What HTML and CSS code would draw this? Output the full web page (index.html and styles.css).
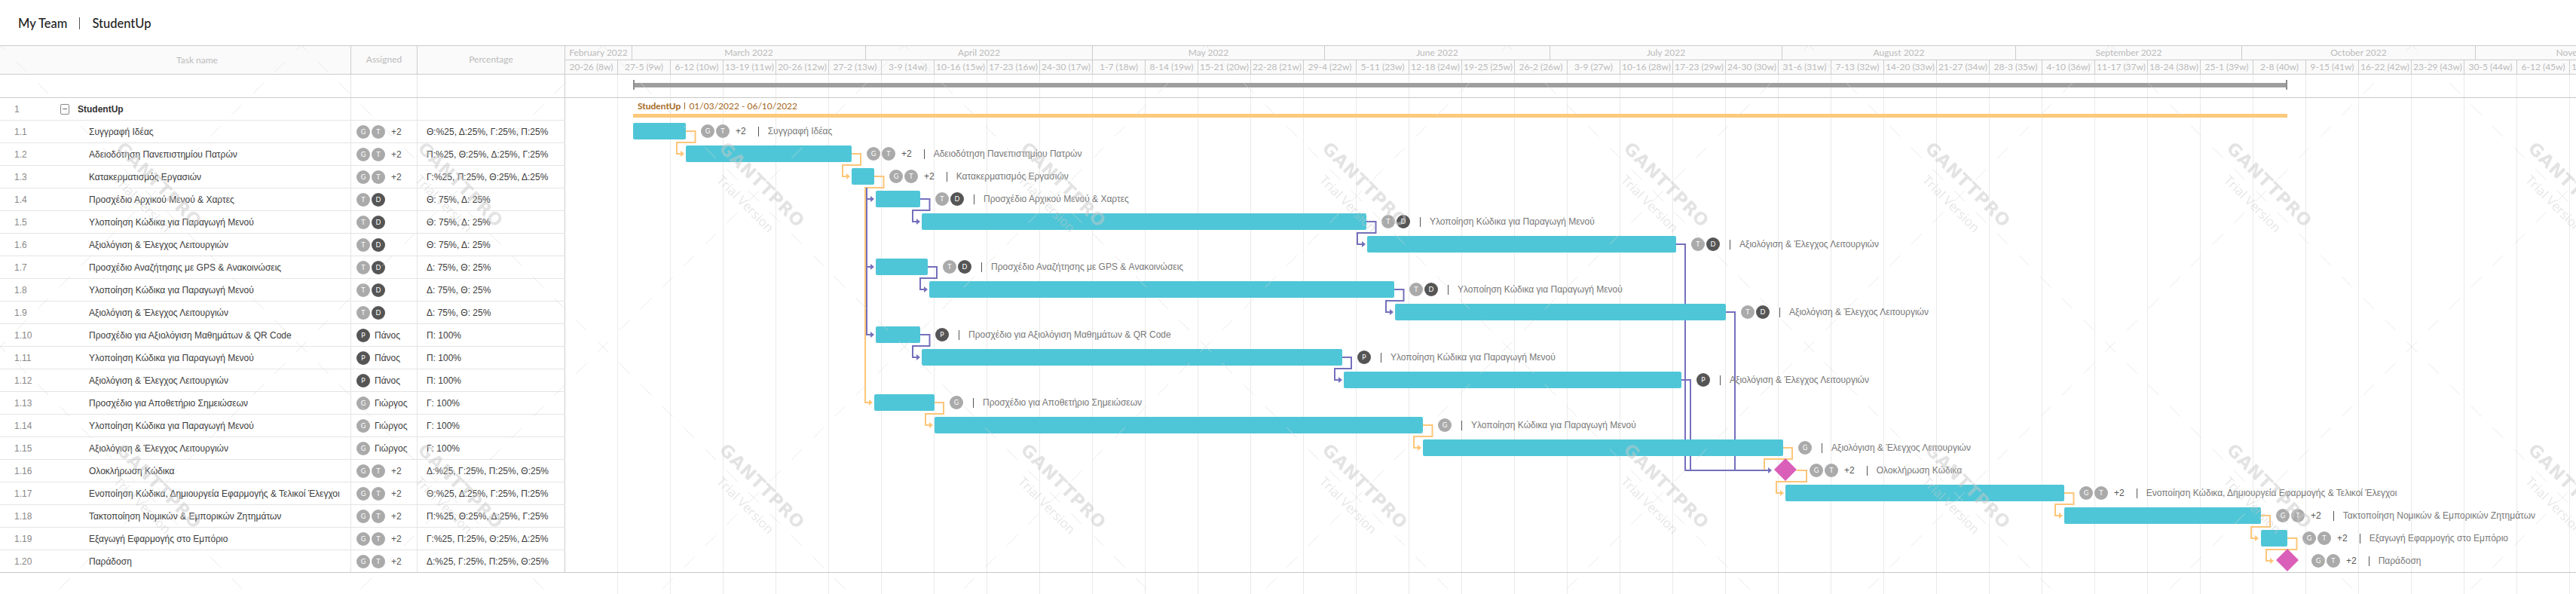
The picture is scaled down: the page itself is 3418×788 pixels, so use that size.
FILE: index.html
```html
<!DOCTYPE html>
<html lang="el">
<head>
    <meta charset="UTF-8">
    <title>StudentUp</title>
    <link rel="stylesheet" href="styles.css">
</head>
<body>
<header class="topbar">
    <span>My Team</span>
    <i class="topbar-sep"></i>
    <span>StudentUp</span>
</header>

<div class="gantt">
    <!-- Left: task table -->
    <div class="grid">
        <div class="row row-head">
            <div class="cell cell-task"><span class="head-task">Task name</span></div>
            <div class="cell cell-assigned head-center">Assigned</div>
            <div class="cell cell-percent head-center">Percentage</div>
        </div>
        <div class="row row-blank">
            <div class="cell cell-task"></div><div class="cell cell-assigned"></div><div class="cell cell-percent"></div>
        </div>
        <div class="row">
            <div class="cell cell-task"><span class="num num-project">1</span><span class="toggle"></span><strong class="project-name">StudentUp</strong></div>
            <div class="cell cell-assigned"></div><div class="cell cell-percent"></div>
        </div>
        <div class="row"><div class="cell cell-task"><span class="num">1.1</span>Συγγραφή Ιδέας</div><div class="cell cell-assigned"><span class="av">G</span><span class="av">T</span><span class="more">+2</span></div><div class="cell cell-percent">Θ:%25, Δ:25%, Γ:25%, Π:25%</div></div>
        <div class="row"><div class="cell cell-task"><span class="num">1.2</span>Αδειοδότηση Πανεπιστημίου Πατρών</div><div class="cell cell-assigned"><span class="av">G</span><span class="av">T</span><span class="more">+2</span></div><div class="cell cell-percent">Π:%25, Θ:25%, Δ:25%, Γ:25%</div></div>
        <div class="row"><div class="cell cell-task"><span class="num">1.3</span>Κατακερματισμός Εργασιών</div><div class="cell cell-assigned"><span class="av">G</span><span class="av">T</span><span class="more">+2</span></div><div class="cell cell-percent">Γ:%25, Π:25%, Θ:25%, Δ:25%</div></div>
        <div class="row"><div class="cell cell-task"><span class="num">1.4</span>Προσχέδιο Αρχικού Μενού &amp; Χαρτες</div><div class="cell cell-assigned"><span class="av">T</span><span class="av av-dark">D</span></div><div class="cell cell-percent">Θ: 75%, Δ: 25%</div></div>
        <div class="row"><div class="cell cell-task"><span class="num">1.5</span>Υλοποίηση Κώδικα για Παραγωγή Μενού</div><div class="cell cell-assigned"><span class="av">T</span><span class="av av-dark">D</span></div><div class="cell cell-percent">Θ: 75%, Δ: 25%</div></div>
        <div class="row"><div class="cell cell-task"><span class="num">1.6</span>Αξιολόγιση &amp; Έλεγχος Λειτουργιών</div><div class="cell cell-assigned"><span class="av">T</span><span class="av av-dark">D</span></div><div class="cell cell-percent">Θ: 75%, Δ: 25%</div></div>
        <div class="row"><div class="cell cell-task"><span class="num">1.7</span>Προσχέδιο Αναζήτησης με GPS &amp; Ανακοινώσεις</div><div class="cell cell-assigned"><span class="av">T</span><span class="av av-dark">D</span></div><div class="cell cell-percent">Δ: 75%, Θ: 25%</div></div>
        <div class="row"><div class="cell cell-task"><span class="num">1.8</span>Υλοποίηση Κώδικα για Παραγωγή Μενού</div><div class="cell cell-assigned"><span class="av">T</span><span class="av av-dark">D</span></div><div class="cell cell-percent">Δ: 75%, Θ: 25%</div></div>
        <div class="row"><div class="cell cell-task"><span class="num">1.9</span>Αξιολόγιση &amp; Έλεγχος Λειτουργιών</div><div class="cell cell-assigned"><span class="av">T</span><span class="av av-dark">D</span></div><div class="cell cell-percent">Δ: 75%, Θ: 25%</div></div>
        <div class="row"><div class="cell cell-task"><span class="num">1.10</span>Προσχέδιο για Αξιολόγιση Μαθημάτων &amp; QR Code</div><div class="cell cell-assigned"><span class="av av-dark">P</span><span class="who">Πάνος</span></div><div class="cell cell-percent">Π: 100%</div></div>
        <div class="row"><div class="cell cell-task"><span class="num">1.11</span>Υλοποίηση Κώδικα για Παραγωγή Μενού</div><div class="cell cell-assigned"><span class="av av-dark">P</span><span class="who">Πάνος</span></div><div class="cell cell-percent">Π: 100%</div></div>
        <div class="row"><div class="cell cell-task"><span class="num">1.12</span>Αξιολόγιση &amp; Έλεγχος Λειτουργιών</div><div class="cell cell-assigned"><span class="av av-dark">P</span><span class="who">Πάνος</span></div><div class="cell cell-percent">Π: 100%</div></div>
        <div class="row"><div class="cell cell-task"><span class="num">1.13</span>Προσχέδιο για Αποθετήριο Σημειώσεων</div><div class="cell cell-assigned"><span class="av">G</span><span class="who">Γιώργος</span></div><div class="cell cell-percent">Γ: 100%</div></div>
        <div class="row"><div class="cell cell-task"><span class="num">1.14</span>Υλοποίηση Κώδικα για Παραγωγή Μενού</div><div class="cell cell-assigned"><span class="av">G</span><span class="who">Γιώργος</span></div><div class="cell cell-percent">Γ: 100%</div></div>
        <div class="row"><div class="cell cell-task"><span class="num">1.15</span>Αξιολόγιση &amp; Έλεγχος Λειτουργιών</div><div class="cell cell-assigned"><span class="av">G</span><span class="who">Γιώργος</span></div><div class="cell cell-percent">Γ: 100%</div></div>
        <div class="row"><div class="cell cell-task"><span class="num">1.16</span>Ολοκλήρωση Κώδικα</div><div class="cell cell-assigned"><span class="av">G</span><span class="av">T</span><span class="more">+2</span></div><div class="cell cell-percent">Δ:%25, Γ:25%, Π:25%, Θ:25%</div></div>
        <div class="row"><div class="cell cell-task"><span class="num">1.17</span>Ενοποίηση Κώδικα, Δημιουργεία Εφαρμογής &amp; Τελικοί Έλεγχοι</div><div class="cell cell-assigned"><span class="av">G</span><span class="av">T</span><span class="more">+2</span></div><div class="cell cell-percent">Θ:%25, Δ:25%, Γ:25%, Π:25%</div></div>
        <div class="row"><div class="cell cell-task"><span class="num">1.18</span>Τακτοποίηση Νομικών &amp; Εμπορικών Ζητημάτων</div><div class="cell cell-assigned"><span class="av">G</span><span class="av">T</span><span class="more">+2</span></div><div class="cell cell-percent">Π:%25, Θ:25%, Δ:25%, Γ:25%</div></div>
        <div class="row"><div class="cell cell-task"><span class="num">1.19</span>Εξαγωγή Εφαρμογής στο Εμπόριο</div><div class="cell cell-assigned"><span class="av">G</span><span class="av">T</span><span class="more">+2</span></div><div class="cell cell-percent">Γ:%25, Π:25%, Θ:25%, Δ:25%</div></div>
        <div class="row"><div class="cell cell-task"><span class="num">1.20</span>Παράδοση</div><div class="cell cell-assigned"><span class="av">G</span><span class="av">T</span><span class="more">+2</span></div><div class="cell cell-percent">Δ:%25, Γ:25%, Π:25%, Θ:25%</div></div>
    </div>

    <!-- Right: timeline -->
    <div class="timeline">
        <div class="months">
            <div class="month" style="width: 89px">February 2022</div>
            <div class="month" style="width: 310px">March 2022</div>
            <div class="month" style="width: 301px">April 2022</div>
            <div class="month" style="width: 308px">May 2022</div>
            <div class="month" style="width: 299px">June 2022</div>
            <div class="month" style="width: 308px">July 2022</div>
            <div class="month" style="width: 310px">August 2022</div>
            <div class="month" style="width: 300px">September 2022</div>
            <div class="month" style="width: 310px">October 2022</div>
            <div class="month" style="width: 300px">November 2022</div>
        </div>
        <div class="weeks">
            <div class="week">20-26 (8w)</div><div class="week">27-5 (9w)</div><div class="week">6-12 (10w)</div><div class="week">13-19 (11w)</div><div class="week">20-26 (12w)</div><div class="week">27-2 (13w)</div>
            <div class="week">3-9 (14w)</div><div class="week">10-16 (15w)</div><div class="week">17-23 (16w)</div><div class="week">24-30 (17w)</div>
            <div class="week">1-7 (18w)</div><div class="week">8-14 (19w)</div><div class="week">15-21 (20w)</div><div class="week">22-28 (21w)</div><div class="week">29-4 (22w)</div>
            <div class="week">5-11 (23w)</div><div class="week">12-18 (24w)</div><div class="week">19-25 (25w)</div><div class="week">26-2 (26w)</div>
            <div class="week">3-9 (27w)</div><div class="week">10-16 (28w)</div><div class="week">17-23 (29w)</div><div class="week">24-30 (30w)</div>
            <div class="week">31-6 (31w)</div><div class="week">7-13 (32w)</div><div class="week">14-20 (33w)</div><div class="week">21-27 (34w)</div><div class="week">28-3 (35w)</div>
            <div class="week">4-10 (36w)</div><div class="week">11-17 (37w)</div><div class="week">18-24 (38w)</div><div class="week">25-1 (39w)</div>
            <div class="week">2-8 (40w)</div><div class="week">9-15 (41w)</div><div class="week">16-22 (42w)</div><div class="week">23-29 (43w)</div><div class="week">30-5 (44w)</div>
            <div class="week">6-12 (45w)</div><div class="week">13-19 (46w)</div>
        </div>

        <div class="chart">
            <!-- dependency links, page coordinates -->
            <svg class="links" viewBox="750 99 2668 689">
                <defs>
                    <marker id="arrow-orange" markerUnits="userSpaceOnUse" markerWidth="5" markerHeight="8" refX="1" refY="4" orient="auto"><path d="M0 0L5 4L0 8z"/></marker>
                    <marker id="arrow-purple" markerUnits="userSpaceOnUse" markerWidth="5" markerHeight="8" refX="1" refY="4" orient="auto"><path d="M0 0L5 4L0 8z"/></marker>
                </defs>
                <g class="link-orange">
                    <path d="M910 174H922.5V189H898V204H904"/>
                    <path d="M1130 204H1142V219H1118V234H1124"/>
                    <path d="M1160 234H1172.5V249H1148V534H1154"/>
                    <path d="M1240 534H1252V549H1228V564H1234"/>
                    <path d="M1888 564H1900.5V579H1876V594H1882"/>
                    <path class="no-arrow" d="M2366 594H2378V609H2341V624H2347"/>
                    <path d="M2384 624H2397V639H2357V654H2363"/>
                    <path d="M2739 654H2751.5V669H2727V684H2733"/>
                    <path d="M2999.5 684H3012V699H2987V714H2993"/>
                    <path d="M3035 714H3047.5V729H3007V744H3013"/>
                </g>
                <g class="link-purple">
                    <path d="M1150 249V264H1156"/>
                    <path d="M1150 264V354H1156"/>
                    <path d="M1150 354V444H1156"/>
                    <path d="M1221 264H1233.5V279H1211V294H1217"/>
                    <path d="M1813 294H1825.5V309H1801V324H1808"/>
                    <path d="M1231 354H1243V369H1221V384H1227"/>
                    <path d="M1850 384H1862.5V399H1839V414H1845"/>
                    <path d="M1221 444H1233.5V459H1211V474H1217"/>
                    <path d="M1781 474H1793V489H1771V504H1777"/>
                    <path d="M2224 324H2236V624H2347"/>
                    <path class="no-arrow" d="M2290 414H2302V624"/>
                    <path class="no-arrow" d="M2231 504H2243V624"/>
                </g>
            </svg>

            <div class="lane-head">
                <div class="summary" style="margin-left: 90px; width: 2195px"></div>
            </div>
            <div class="lane lane-project">
                <div class="project-label" style="margin-left: 96px"><strong>StudentUp</strong><i></i>01/03/2022 - 06/10/2022</div>
                <div class="project-bar" style="margin-left: 90px; width: 2195px"></div>
            </div>

            <div class="lane"><div class="bar" style="margin-left: 90px; width: 70px"></div><div class="meta"><span class="av">G</span><span class="av">T</span><span class="more">+2</span><i class="sep"></i><span>Συγγραφή Ιδέας</span></div></div>
            <div class="lane"><div class="bar" style="margin-left: 160px; width: 220px"></div><div class="meta"><span class="av">G</span><span class="av">T</span><span class="more">+2</span><i class="sep"></i><span>Αδειοδότηση Πανεπιστημίου Πατρών</span></div></div>
            <div class="lane"><div class="bar" style="margin-left: 380px; width: 30px"></div><div class="meta"><span class="av">G</span><span class="av">T</span><span class="more">+2</span><i class="sep"></i><span>Κατακερματισμός Εργασιών</span></div></div>
            <div class="lane"><div class="bar" style="margin-left: 412px; width: 59px"></div><div class="meta"><span class="av">T</span><span class="av av-dark">D</span><i class="sep"></i><span>Προσχέδιο Αρχικού Μενού &amp; Χαρτες</span></div></div>
            <div class="lane"><div class="bar" style="margin-left: 473px; width: 590px"></div><div class="meta"><span class="av">T</span><span class="av av-dark">D</span><i class="sep"></i><span>Υλοποίηση Κώδικα για Παραγωγή Μενού</span></div></div>
            <div class="lane"><div class="bar" style="margin-left: 1064px; width: 410px"></div><div class="meta"><span class="av">T</span><span class="av av-dark">D</span><i class="sep"></i><span>Αξιολόγιση &amp; Έλεγχος Λειτουργιών</span></div></div>
            <div class="lane"><div class="bar" style="margin-left: 412px; width: 69px"></div><div class="meta"><span class="av">T</span><span class="av av-dark">D</span><i class="sep"></i><span>Προσχέδιο Αναζήτησης με GPS &amp; Ανακοινώσεις</span></div></div>
            <div class="lane"><div class="bar" style="margin-left: 483px; width: 617px"></div><div class="meta"><span class="av">T</span><span class="av av-dark">D</span><i class="sep"></i><span>Υλοποίηση Κώδικα για Παραγωγή Μενού</span></div></div>
            <div class="lane"><div class="bar" style="margin-left: 1101px; width: 439px"></div><div class="meta"><span class="av">T</span><span class="av av-dark">D</span><i class="sep"></i><span>Αξιολόγιση &amp; Έλεγχος Λειτουργιών</span></div></div>
            <div class="lane"><div class="bar" style="margin-left: 412px; width: 59px"></div><div class="meta"><span class="av av-dark">P</span><i class="sep"></i><span>Προσχέδιο για Αξιολόγιση Μαθημάτων &amp; QR Code</span></div></div>
            <div class="lane"><div class="bar" style="margin-left: 473px; width: 558px"></div><div class="meta"><span class="av av-dark">P</span><i class="sep"></i><span>Υλοποίηση Κώδικα για Παραγωγή Μενού</span></div></div>
            <div class="lane"><div class="bar" style="margin-left: 1033px; width: 448px"></div><div class="meta"><span class="av av-dark">P</span><i class="sep"></i><span>Αξιολόγιση &amp; Έλεγχος Λειτουργιών</span></div></div>
            <div class="lane"><div class="bar" style="margin-left: 410px; width: 80px"></div><div class="meta"><span class="av">G</span><i class="sep"></i><span>Προσχέδιο για Αποθετήριο Σημειώσεων</span></div></div>
            <div class="lane"><div class="bar" style="margin-left: 490px; width: 648px"></div><div class="meta"><span class="av">G</span><i class="sep"></i><span>Υλοποίηση Κώδικα για Παραγωγή Μενού</span></div></div>
            <div class="lane"><div class="bar" style="margin-left: 1138px; width: 478px"></div><div class="meta"><span class="av">G</span><i class="sep"></i><span>Αξιολόγιση &amp; Έλεγχος Λειτουργιών</span></div></div>
            <div class="lane"><div class="milestone" style="margin-left: 1604px"></div><div class="meta meta-milestone"><span class="av">G</span><span class="av">T</span><span class="more">+2</span><i class="sep"></i><span>Ολοκλήρωση Κώδικα</span></div></div>
            <div class="lane"><div class="bar" style="margin-left: 1619px; width: 370px"></div><div class="meta"><span class="av">G</span><span class="av">T</span><span class="more">+2</span><i class="sep"></i><span>Ενοποίηση Κώδικα, Δημιουργεία Εφαρμογής &amp; Τελικοί Έλεγχοι</span></div></div>
            <div class="lane"><div class="bar" style="margin-left: 1989px; width: 261px"></div><div class="meta"><span class="av">G</span><span class="av">T</span><span class="more">+2</span><i class="sep"></i><span>Τακτοποίηση Νομικών &amp; Εμπορικών Ζητημάτων</span></div></div>
            <div class="lane"><div class="bar" style="margin-left: 2250px; width: 35px"></div><div class="meta"><span class="av">G</span><span class="av">T</span><span class="more">+2</span><i class="sep"></i><span>Εξαγωγή Εφαρμογής στο Εμπόριο</span></div></div>
            <div class="lane lane-last"><div class="milestone" style="margin-left: 2270px"></div><div class="meta meta-milestone"><span class="av">G</span><span class="av">T</span><span class="more">+2</span><i class="sep"></i><span>Παράδοση</span></div></div>
        </div>
    </div>

    <!-- Trial watermark, lies over the whole chart -->
    <svg class="watermark" width="100%" height="100%">
        <defs>
            <pattern id="trial-tile" width="400" height="400" patternUnits="userSpaceOnUse">
                <path class="wm-lines" d="M0 0L400 400M400 0L0 400"/>
                <text class="wm-brand" x="153" y="138" textLength="148" transform="rotate(45 153 138)">GANTTPRO</text>
                <text class="wm-trial" x="150" y="180" textLength="98" transform="rotate(45 150 180)">Trial Version</text>
            </pattern>
        </defs>
        <rect width="100%" height="100%" fill="url(#trial-tile)"/>
    </svg>
</div>
</body>
</html>
```

FILE: styles.css
```css
* {
    box-sizing: border-box;
}

html, body {
    margin: 0;
    height: 100%;
    overflow: hidden;
    background: white;
}

body {
    font-family: "Liberation Sans", sans-serif;
    font-size: 12px;
    color: #3c3c3c;
}

/* Top bar */
.topbar {
    height: 60px;
    padding: 2px 0 0 24px;
    display: flex;
    align-items: center;
    font-family: Lato, sans-serif;
    font-size: 16.5px;
    font-weight: 500;
    color: #222;
}

.topbar-sep {
    width: 1px;
    height: 16px;
    margin: 0 16px;
    background: #555;
}

/* Gantt frame */
.gantt {
    position: relative;
    display: flex;
    height: 728px;
}

/* Task table */
.grid {
    flex: none;
    width: 750px;
}

.row {
    display: flex;
    height: 30px;
    border-bottom: 1px solid #e4e4e4;
}

.row:last-child {
    border-bottom-color: #c8c8c8;
}

.row-head {
    height: 39px;
    background: #fafafa;
    border-top: 1px solid #ccc;
    border-bottom-color: #ccc;
    font-family: Lato, sans-serif;
    color: #bbb;
}

.row-blank {
    height: 31px;
    border-bottom-color: #ccc;
}

.cell {
    display: flex;
    align-items: center;
    border-right: 1px solid #e4e4e4;
    white-space: nowrap;
}

.row-head .cell {
    border-right-color: #ccc;
}

.cell-task {
    width: 466px;
    padding-left: 19px;
}

.cell-assigned {
    width: 88px;
    padding-left: 7px;
}

.cell-percent {
    width: 196px;
    padding-left: 12px;
    border-right-color: #ccc;
}

.head-center {
    justify-content: center;
    padding: 0 0 2px;
}

.head-task {
    width: 100%;
    padding-left: 39px;
    text-align: center;
}

.num {
    flex: none;
    width: 99px;
    color: #888;
}

.num-project {
    width: 61px;
}

.toggle {
    position: relative;
    width: 12px;
    height: 14px;
    margin-right: 11px;
    border: 1px solid #888;
    border-radius: 2px;
}

.toggle::after {
    content: "";
    position: absolute;
    left: 2px;
    right: 2px;
    top: 5px;
    height: 1px;
    background: #666;
}

.project-name {
    color: #333;
}

.av {
    flex: none;
    width: 18px;
    height: 18px;
    margin-right: 2px;
    border-radius: 50%;
    background: #aaa;
    color: white;
    font-family: Lato, sans-serif;
    font-size: 9px;
    line-height: 18px;
    text-align: center;
}

.av-dark {
    background: #555;
}

.more {
    margin-left: 6px;
    color: #555;
}

.who {
    margin-left: 4px;
}

/* Timeline header */
.timeline {
    flex: 1;
    min-width: 0;
    overflow: hidden;
}

.months,
.weeks {
    display: flex;
    background: #fafafa;
    font-family: Lato, sans-serif;
    color: #bbb;
    white-space: nowrap;
}

.months {
    height: 20px;
    border-top: 1px solid #ccc;
}

.month {
    flex: none;
    line-height: 18px;
    text-align: center;
    overflow: hidden;
    border-right: 1px solid #ccc;
    border-bottom: 1px solid #ccc;
}

.weeks {
    height: 19px;
}

.week {
    flex: none;
    width: 70px;
    line-height: 18px;
    text-align: center;
    overflow: hidden;
    border-right: 1px solid #ccc;
    border-bottom: 1px solid #ccc;
}

/* Chart area */
.chart {
    position: relative;
    height: 689px;
    background: repeating-linear-gradient(90deg, transparent 0 69px, #eaeaea 69px 70px);
    color: #777;
}

.links {
    position: absolute;
    left: 0;
    top: 0;
    width: 2668px;
    height: 689px;
}

.links path {
    fill: none;
    stroke-width: 2;
}

.link-orange path {
    stroke: #fdc678;
    marker-end: url(#arrow-orange);
}

.link-purple path {
    stroke: #7470bc;
    marker-end: url(#arrow-purple);
}

.links .no-arrow {
    marker-end: none;
}

#arrow-orange path {
    fill: #fdc678;
    stroke: none;
}

#arrow-purple path {
    fill: #7470bc;
    stroke: none;
}

.lane-head {
    position: relative;
    display: flex;
    align-items: center;
    height: 31px;
    padding-bottom: 3px;
    border-bottom: 1px solid #c8c8c8;
}

.summary {
    position: relative;
    height: 6px;
    background: #9e9e9e;
}

.summary::before,
.summary::after {
    content: "";
    position: absolute;
    top: -4px;
    width: 2px;
    height: 13px;
    background: #8c8c8c;
}

.summary::before {
    left: 0;
}

.summary::after {
    right: 0;
}

.lane {
    position: relative;
    display: flex;
    align-items: center;
    height: 30px;
    padding-bottom: 2px;
    white-space: nowrap;
}

.lane-project {
    display: block;
    padding: 0;
}

.lane-last {
    border-bottom: 1px solid #c8c8c8;
    padding-bottom: 1px;
}

.project-label {
    height: 21px;
    line-height: 21px;
    font-family: Lato, sans-serif;
    color: #a5671c;
}

.project-label i {
    display: inline-block;
    width: 1px;
    height: 9px;
    margin: 0 5px;
    background: #a5671c;
}

.project-bar {
    height: 5px;
    background: #fdc97b;
}

.bar {
    flex: none;
    height: 22px;
    border-radius: 2px;
    background: #4fc6d7;
}

.milestone {
    flex: none;
    width: 30px;
    height: 30px;
    margin-bottom: 2px;
    background: #d95fb9;
    clip-path: polygon(50% 0, 100% 50%, 50% 100%, 0 50%);
}

.meta {
    display: flex;
    align-items: center;
    margin-left: 20px;
}

.meta-milestone {
    margin-left: 17px;
}

.sep {
    width: 1px;
    height: 13px;
    margin: 0 12px 0 11px;
    background: #555;
}

.more + .sep {
    margin-left: 16px;
}

/* Watermark */
.watermark {
    position: absolute;
    left: 0;
    top: 0;
    pointer-events: none;
}

.wm-lines {
    fill: none;
    stroke: #d8d8d8;
    stroke-opacity: 0.55;
    stroke-dasharray: 20 20.4;
    stroke-dashoffset: 10;
}

.wm-brand {
    font-family: "DejaVu Sans", sans-serif;
    font-weight: bold;
    font-size: 23px;
    fill: #c8c8c8;
    fill-opacity: 0.5;
}

.wm-trial {
    font-family: "Open Sans", sans-serif;
    font-size: 17px;
    fill: #c8c8c8;
    fill-opacity: 0.45;
}
```
